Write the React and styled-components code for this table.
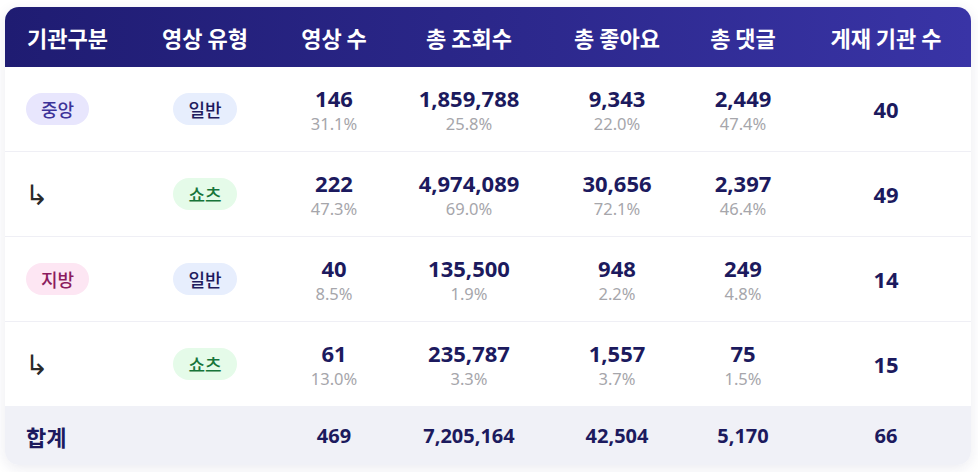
import React from 'react';
import styled, { createGlobalStyle } from 'styled-components';

const GlobalStyle = createGlobalStyle`
  body {
    margin: 0;
    background: #ffffff;
    font-family: "Noto Sans", "Noto Sans CJK KR", sans-serif;
  }
`;

const COLS = '126px 148px 110px 160px 136px 116px 170px';

const Page = styled.div`
  padding: 7px 7px 8px 5px;
`;

const Card = styled.div`
  width: 966px;
  border-radius: 14px;
  overflow: hidden;
  background: #ffffff;
  box-shadow: 0 3px 14px rgba(30, 30, 90, 0.09);
`;

const HeaderRow = styled.div`
  display: grid;
  grid-template-columns: ${COLS};
  height: 60px;
  align-items: center;
  background: linear-gradient(90deg, #1f1c72 0%, #2b278a 50%, #3934a6 100%);
`;

const HeadCell = styled.div`
  color: #ffffff;
  font-family: "Noto Sans CJK KR", sans-serif;
  font-weight: 700;
  font-size: 22px;
  text-align: ${(p) => (p.$left ? 'left' : 'center')};
  padding-left: ${(p) => (p.$left ? '22px' : '0')};
  white-space: nowrap;
`;

const Row = styled.div`
  display: grid;
  grid-template-columns: ${COLS};
  height: 84px;
  align-items: center;
  border-bottom: ${(p) => (p.$last ? 'none' : '1px solid #efeff5')};
`;

const FooterRow = styled(Row)`
  height: 59px;
  background: #f0f1f7;
  border-bottom: none;
`;

const Cell = styled.div`
  display: flex;
  flex-direction: column;
  align-items: ${(p) => (p.$left ? 'flex-start' : 'center')};
  padding-left: ${(p) => (p.$left ? '21px' : '0')};
`;

const badgeColors = {
  central: { bg: '#e8e6fd', fg: '#3d3399' },
  local: { bg: '#fde6f3', fg: '#8c1c5e' },
  normal: { bg: '#e7eefd', fg: '#1e1b5e' },
  shorts: { bg: '#e5fbe9', fg: '#17753a' },
};

const Badge = styled.span`
  display: inline-flex;
  align-items: center;
  justify-content: center;
  height: 32px;
  padding: 0 15px;
  border-radius: 16px;
  font-family: "Noto Sans CJK KR", sans-serif;
  font-size: 18px;
  font-weight: 500;
  background: ${(p) => badgeColors[p.$kind].bg};
  color: ${(p) => badgeColors[p.$kind].fg};
`;

const SubArrow = styled.span`
  font-family: "DejaVu Sans", sans-serif;
  font-size: 28px;
  font-weight: 400;
  line-height: 1;
  color: #2a2a2a;
  margin-left: -1px;
  margin-top: 3px;
`;

const Value = styled.div`
  font-size: ${(p) => (p.$small ? '20px' : '22px')};
  font-weight: 700;
  color: #1c1a5e;
  line-height: 26px;
`;

const Percent = styled.div`
  font-size: 16.5px;
  color: #a6a6ab;
  line-height: 20px;
  margin-top: 3px;
`;

const FootLabel = styled.div`
  font-family: "Noto Sans CJK KR", sans-serif;
  font-size: 22px;
  font-weight: 700;
  color: #1c1a5e;
`;

const headers = ['기관구분', '영상 유형', '영상 수', '총 조회수', '총 좋아요', '총 댓글', '게재 기관 수'];

const rows = [
  { org: '중앙', orgKind: 'central', type: '일반', typeKind: 'normal', stats: [['146', '31.1%'], ['1,859,788', '25.8%'], ['9,343', '22.0%'], ['2,449', '47.4%']], count: '40' },
  { org: null, type: '쇼츠', typeKind: 'shorts', stats: [['222', '47.3%'], ['4,974,089', '69.0%'], ['30,656', '72.1%'], ['2,397', '46.4%']], count: '49' },
  { org: '지방', orgKind: 'local', type: '일반', typeKind: 'normal', stats: [['40', '8.5%'], ['135,500', '1.9%'], ['948', '2.2%'], ['249', '4.8%']], count: '14' },
  { org: null, type: '쇼츠', typeKind: 'shorts', stats: [['61', '13.0%'], ['235,787', '3.3%'], ['1,557', '3.7%'], ['75', '1.5%']], count: '15' },
];

const totals = ['469', '7,205,164', '42,504', '5,170', '66'];

export default function App() {
  return (
    <Page>
      <GlobalStyle />
      <Card>
        <HeaderRow>
          {headers.map((h, i) => (
            <HeadCell key={h} $left={i === 0}>{h}</HeadCell>
          ))}
        </HeaderRow>
        {rows.map((r, i) => (
          <Row key={i} $last={i === rows.length - 1}>
            <Cell $left>
              {r.org ? <Badge $kind={r.orgKind}>{r.org}</Badge> : <SubArrow>↳</SubArrow>}
            </Cell>
            <Cell>
              <Badge $kind={r.typeKind}>{r.type}</Badge>
            </Cell>
            {r.stats.map(([v, p], j) => (
              <Cell key={j}>
                <Value>{v}</Value>
                <Percent>{p}</Percent>
              </Cell>
            ))}
            <Cell>
              <Value>{r.count}</Value>
            </Cell>
          </Row>
        ))}
        <FooterRow>
          <Cell $left>
            <FootLabel>합계</FootLabel>
          </Cell>
          <Cell />
          {totals.map((t, i) => (
            <Cell key={i}>
              <Value $small>{t}</Value>
            </Cell>
          ))}
        </FooterRow>
      </Card>
    </Page>
  );
}
